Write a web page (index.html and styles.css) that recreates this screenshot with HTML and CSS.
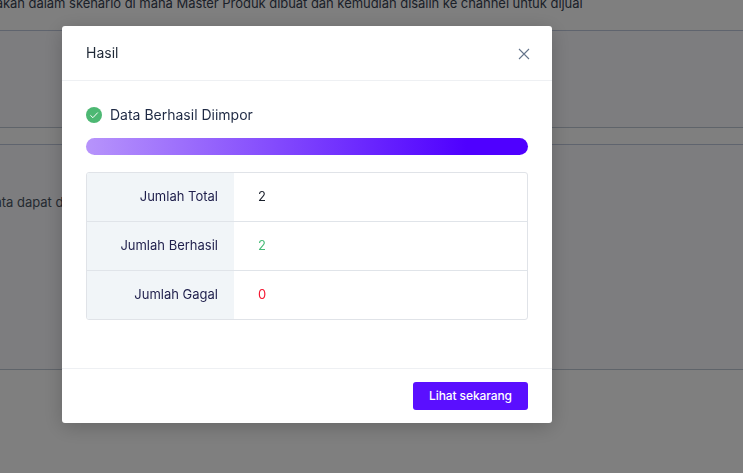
FILE: index.html
```html
<!DOCTYPE html>
<html lang="id">
<head>
<meta charset="utf-8">
<title>Hasil</title>
<link rel="stylesheet" href="styles.css">
</head>
<body>
<div class="page">
  <p class="intro">Digunakan dalam skenario di mana Master Produk dibuat dan kemudian disalin ke channel untuk dijual</p>
  <section class="panel panel-one"></section>
  <section class="panel panel-two"><p class="panel-text">Data dapat diimpor</p></section>
</div>
<div class="overlay"></div>
<div class="modal" role="dialog">
  <header class="modal-head">
    <h2 class="modal-title">Hasil</h2>
    <svg class="close" width="12" height="12" viewBox="0 0 12 12"><path d="M1 1l10 10M11 1L1 11"/></svg>
  </header>
  <div class="modal-body">
    <div class="status">
      <svg class="status-icon" width="16" height="16" viewBox="0 0 16 16"><circle cx="8" cy="8" r="8"/><path d="M4.4 8.3l2.5 2.4 4.9-5.2"/></svg>
      <span>Data Berhasil Diimpor</span>
    </div>
    <div class="progress"></div>
    <div class="stats">
      <div class="row"><div class="label">Jumlah Total</div><div class="value">2</div></div>
      <div class="row"><div class="label">Jumlah Berhasil</div><div class="value ok">2</div></div>
      <div class="row"><div class="label">Jumlah Gagal</div><div class="value bad">0</div></div>
    </div>
  </div>
  <footer class="modal-foot"><button class="primary" type="button">Lihat sekarang</button></footer>
</div>
</body>
</html>
```
FILE: styles.css
```css
* { box-sizing: border-box; }
html, body { margin: 0; height: 100%; overflow: hidden; }
body { background: #fff; font-family: Inter, "Noto Sans", sans-serif; color: #1f2937; }
.page { height: 473px; overflow: hidden; }
.intro { margin: -4px 0 0 -40px; height: 34px; font-size: 13px; line-height: 14px; letter-spacing: -.04px; white-space: nowrap; color: #374151; }
.panel { background: #fafbff; border-top: 1px solid #bfc8dc; border-bottom: 1px solid #bfc8d4; }
.panel-one { height: 98px; margin-bottom: 16px; }
.panel-two { height: 226px; padding-top: 49px; }
.panel-text { margin: 0 0 0 -15px; font-size: 13px; line-height: 17px; color: #4b5563; white-space: nowrap; }
.overlay { position: fixed; inset: 0; background: rgba(0, 0, 0, .5); }
.modal { position: fixed; left: 62px; top: 26px; width: 490px; height: 397px; display: flex; flex-direction: column; background: #fff; border-radius: 3px; box-shadow: 0 4px 20px rgba(0, 0, 0, .2); }
.modal-head { height: 55px; flex: none; display: flex; align-items: center; justify-content: space-between; padding: 0 22px 0 24px; border-bottom: 1px solid #eef0f3; }
.modal-title { margin: 0; font-size: 14px; line-height: 20px; font-weight: 400; color: #1f2937; }
.close { fill: none; stroke: #64748b; stroke-width: 1.1; margin-top: 1px; }
.modal-body { flex: 1; padding: 25px 24px 0; }
.status { display: flex; align-items: center; gap: 8px; height: 18px; font-size: 14px; line-height: 18px; color: #1f2a44; }
.status-icon circle { fill: #4db873; }
.status-icon path { fill: none; stroke: #fff; stroke-width: 1; }
.progress { height: 17px; margin-top: 14px; border-radius: 9px; background: linear-gradient(90deg, #b794fb, #4f00ff 86%); }
.stats { margin-top: 17px; border: 1px solid #e0e3e8; border-radius: 3px; overflow: hidden; }
.row { display: flex; height: 49px; border-bottom: 1px solid #e0e4e9; }
.row:last-child { height: 48px; border-bottom: 0; }
.label { width: 147px; display: flex; align-items: center; justify-content: flex-end; padding: 0 16px 2px 0; background: #f1f5f8; font-size: 13px; color: #1e1e4b; }
.value { display: flex; align-items: center; padding: 0 0 2px 24px; font-size: 13px; color: #1a202c; }
.ok { color: #48bb78; }
.bad { color: #f5142f; }
.modal-foot { height: 55px; flex: none; display: flex; align-items: flex-start; justify-content: flex-end; padding: 13px 24px 0; border-top: 1px solid #eef0f3; }
.primary { width: 115px; height: 28px; border: 0; border-radius: 3px; background: #5a0fff; color: #fff; font: 500 12px/28px Inter, "Noto Sans", sans-serif; letter-spacing: -.1px; padding: 0; }
```
